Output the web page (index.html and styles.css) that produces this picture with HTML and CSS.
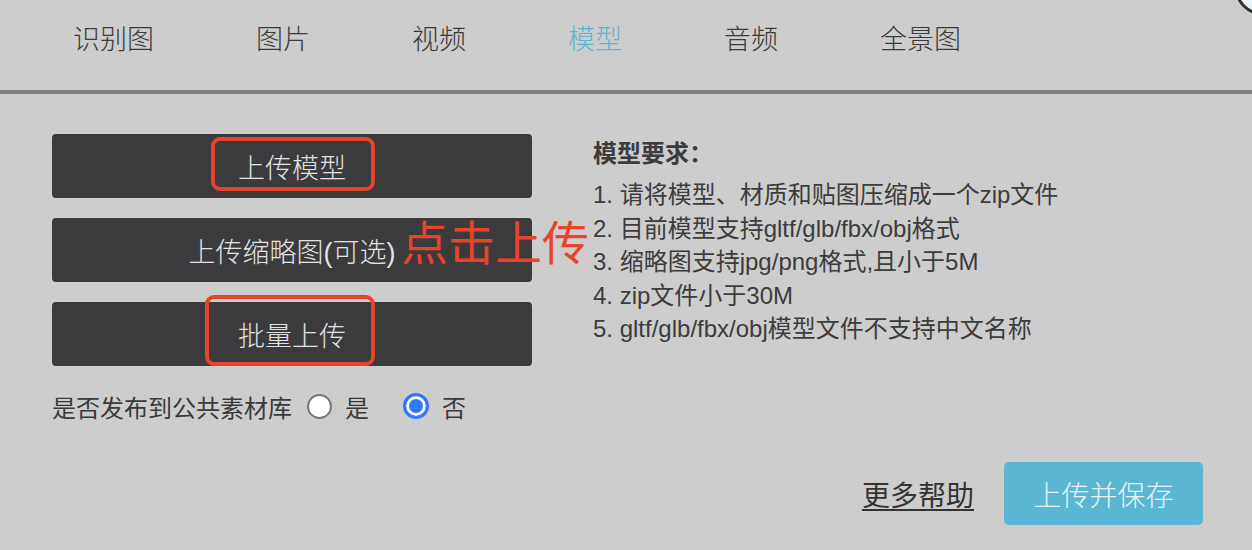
FILE: index.html
```html
<!DOCTYPE html>
<html lang="zh-CN">

<head>
    <meta charset="UTF-8" />
    <meta name="viewport" content="width=device-width, initial-scale=1.0" />
    <title>上传模型</title>
    <link rel="stylesheet" href="styles.css">
</head>

<body>
    <div class="close-btn"></div>

    <nav class="tabs">
        <span class="tab">识别图</span>
        <span class="tab">图片</span>
        <span class="tab">视频</span>
        <span class="tab active">模型</span>
        <span class="tab">音频</span>
        <span class="tab">全景图</span>
    </nav>

    <div class="main">
        <div class="upload-col">
            <div class="upload-btn">
                上传模型
                <span class="mark mark-model"></span>
            </div>
            <div class="upload-btn">
                上传缩略图(可选)
                <span class="hint">点击上传</span>
            </div>
            <div class="upload-btn">
                批量上传
                <span class="mark mark-batch"></span>
            </div>

            <div class="publish-row">
                <span class="publish-label">是否发布到公共素材库</span>
                <label class="radio"><input type="radio" name="publish" value="1" />是</label>
                <label class="radio"><input type="radio" name="publish" value="0" checked />否</label>
            </div>
        </div>

        <div class="rules">
            <div class="rules-title">模型要求：</div>
            <div class="rule">1. 请将模型、材质和贴图压缩成一个zip文件</div>
            <div class="rule">2. 目前模型支持gltf/glb/fbx/obj格式</div>
            <div class="rule">3. 缩略图支持jpg/png格式,且小于5M</div>
            <div class="rule">4. zip文件小于30M</div>
            <div class="rule">5. gltf/glb/fbx/obj模型文件不支持中文名称</div>
        </div>
    </div>

    <div class="footer">
        <a class="help" href="#">更多帮助</a>
        <button class="save-btn" type="button">上传并保存</button>
    </div>
</body>

</html>
```

FILE: styles.css
```css
body {
    margin: 0;
    height: 550px;
    position: relative;
    overflow: hidden;
    background-color: #cdcdcd;
    color: #3a3a3a;
    font-family: "Liberation Sans", "Noto Sans CJK SC", sans-serif;
}

.close-btn {
    position: absolute;
    left: 1235px;
    top: -39px;
    width: 48px;
    height: 48px;
    border: 3px solid #2e2e2e;
    border-radius: 50%;
    background-color: #eaf5f9;
}

.tabs {
    display: flex;
    gap: 102px;
    box-sizing: border-box;
    height: 94px;
    padding: 27px 0 0 73px;
    border-bottom: 4px solid #7e7e7e;
}

.tab {
    font-size: 27px;
    line-height: 27px;
    font-weight: 300;
    color: #3a3a3a;
}

.tab.active {
    color: #5bb6d4;
}

.main {
    display: flex;
    padding: 40px 0 0 52px;
}

.upload-col {
    width: 480px;
    display: flex;
    flex-direction: column;
    gap: 20px;
}

.upload-btn {
    position: relative;
    height: 64px;
    display: flex;
    align-items: center;
    justify-content: center;
    background-color: #3b3a3c;
    border-radius: 4px;
    color: #e2e2e2;
    font-size: 27px;
    font-weight: 300;
}

.mark {
    position: absolute;
    border: 4px solid #e8432b;
    border-radius: 9px;
    box-sizing: border-box;
}

.mark-model {
    left: 159px;
    top: 3px;
    width: 164px;
    height: 54px;
}

.mark-batch {
    left: 153px;
    top: -7px;
    width: 170px;
    height: 71px;
}

.hint {
    position: absolute;
    left: 349px;
    top: 2px;
    font-size: 47px;
    line-height: 47px;
    font-weight: 400;
    color: #e8432b;
    white-space: nowrap;
}

.publish-row {
    display: flex;
    align-items: center;
    height: 34px;
    margin-top: 3px;
    font-size: 24px;
}

.publish-label {
    margin-right: 15px;
}

.radio {
    display: flex;
    align-items: center;
    gap: 13px;
    margin-right: 34px;
}

.radio input {
    appearance: none;
    margin: 0;
    width: 25px;
    height: 25px;
    border: 2px solid #777;
    border-radius: 50%;
    background-color: #fff;
    box-sizing: border-box;
}

.radio input:checked {
    width: 26px;
    height: 26px;
    border: 3px solid #3478f6;
    background-color: #3478f6;
    box-shadow: inset 0 0 0 3px #fff;
}

.rules {
    margin-left: 61px;
    padding-top: 3px;
    font-size: 24px;
    color: #3c3c3c;
}

.rules-title {
    line-height: 34px;
    font-weight: bold;
    margin-bottom: 7px;
}

.rule {
    line-height: 33.5px;
}

.footer {
    display: flex;
    justify-content: flex-end;
    align-items: center;
    gap: 30px;
    padding-right: 49px;
    margin-top: 39px;
}

.help {
    color: #333;
    font-size: 28px;
    text-decoration: underline;
    text-decoration-thickness: 2px;
    text-underline-offset: 3px;
}

.save-btn {
    width: 199px;
    height: 63px;
    border: none;
    border-radius: 5px;
    background-color: #5bb6d4;
    color: #e6f3f7;
    font-family: inherit;
    font-size: 28px;
    font-weight: 300;
}
```
